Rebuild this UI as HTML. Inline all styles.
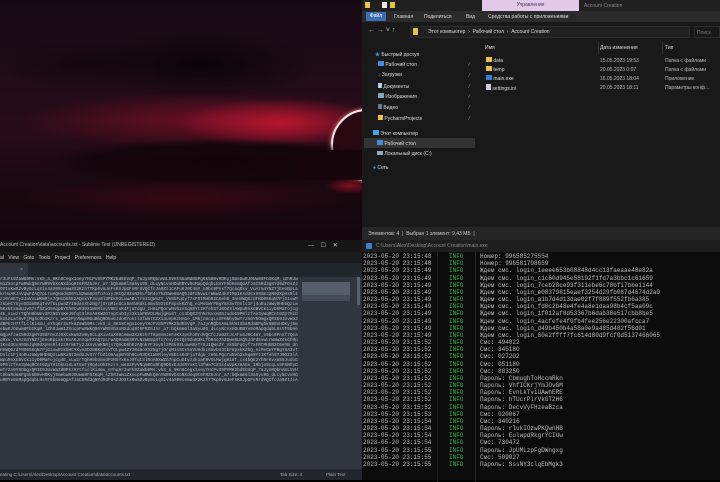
<!DOCTYPE html>
<html><head><meta charset="utf-8">
<style>
*{margin:0;padding:0;box-sizing:border-box}
body{width:720px;height:480px;overflow:hidden;background:#000;font-family:"Liberation Sans","Noto Sans CJK SC",sans-serif;position:relative}
.abs{position:absolute}
#wall{left:0;top:0;width:362px;height:240px;overflow:hidden;background:linear-gradient(#150a14,#240c18 40%,#2a0c18 55%,#1c0810 75%,#14060c)}
.g{position:absolute;border-radius:50%}
#arc{left:331px;top:109px;width:72px;height:72px;border-radius:50%;border:2px solid #f2e8ea;box-shadow:0 0 4px #f88;background:#2a0812}
#exp{left:362px;top:0;width:358px;height:240px;background:#191919;font-size:5px;color:#ddd}
#con{left:362px;top:240px;width:358px;height:240px;background:#0c0c0c;font-family:"Liberation Mono","DejaVu Sans Mono",monospace;font-size:6px;color:#bdbdbd}
#con .l{position:absolute;left:1px;white-space:pre;height:7px;line-height:7px}
#subl{left:0;top:240px;width:362px;height:240px;background:#303540}
#code{left:0;top:277px;width:300px;height:106px;overflow:hidden;font-family:"Liberation Mono",monospace;font-size:4.4px;line-height:5.05px;color:#b8bec9;word-break:break-all}
</style></head><body>
<div id="wall" class="abs">
 <div class="g" style="left:80px;top:30px;width:240px;height:70px;background:radial-gradient(closest-side,rgba(8,3,8,.85),rgba(8,3,8,0))"></div>
 <div class="g" style="left:0;top:40px;width:160px;height:50px;background:radial-gradient(closest-side,rgba(8,3,8,.5),rgba(8,3,8,0))"></div>
 <div class="g" style="left:20px;top:92px;width:380px;height:56px;background:radial-gradient(closest-side,rgba(120,15,38,.85),rgba(120,15,38,0))"></div>
 <div class="g" style="left:180px;top:98px;width:200px;height:50px;background:radial-gradient(closest-side,rgba(190,22,48,.95),rgba(190,22,48,0))"></div>
 <div id="arc" class="abs"></div>
 <div class="g" style="left:40px;top:138px;width:360px;height:48px;background:radial-gradient(closest-side,rgba(18,5,10,1),rgba(18,5,10,.85) 70%,rgba(18,5,10,0))"></div>
 <div class="abs" style="left:300px;top:150px;width:62px;height:30px;background:#16060c"></div>
 <div class="g" style="left:325px;top:178px;width:50px;height:16px;background:radial-gradient(closest-side,rgba(150,15,38,.85),rgba(150,15,38,0))"></div>
 <div class="g" style="left:20px;top:178px;width:330px;height:40px;background:radial-gradient(closest-side,rgba(80,10,28,.55),rgba(80,10,28,0))"></div>
</div>

<div id="exp" class="abs">
 <div class="abs" style="left:0;top:0;width:358px;height:11px;background:#202020"></div>
 <div class="abs" style="left:3px;top:2px;width:5px;height:6px;background:#e8c24a"></div>
 <div class="abs" style="left:20px;top:2px;width:5px;height:6px;background:#eee"></div>
 <div class="abs" style="left:28px;top:2px;width:5px;height:6px;background:#e8c24a"></div>
 <div class="abs" style="left:120px;top:0;width:97px;height:11px;background:#e3c8ec;color:#444;text-align:center;line-height:11px">Управление</div>
 <div class="abs" style="left:222px;top:3px;color:#888">Account Creation</div>
 <div class="abs" style="left:0;top:11px;width:358px;height:11px;background:#2b2b2b"></div>
 <div class="abs" style="left:4px;top:12px;width:20px;height:9px;background:#3c6fb5;color:#fff;text-align:center;line-height:9px">Файл</div>
 <div class="abs" style="left:32px;top:14px">Главная</div>
 <div class="abs" style="left:62px;top:14px">Поделиться</div>
 <div class="abs" style="left:104px;top:14px">Вид</div>
 <div class="abs" style="left:126px;top:14px">Средства работы с приложениями</div>
 <div class="abs" style="left:6px;top:27px;color:#ccc;font-size:7px">← → ˅ ↑</div>
 <div class="abs" style="left:48px;top:26px;width:280px;height:12px;background:#202020;border:1px solid #2e2e2e"></div>
 <div class="abs" style="left:51px;top:28px;width:5px;height:7px;background:#e8c24a"></div>
 <div class="abs" style="left:66px;top:29px">Этот компьютер &nbsp;›&nbsp; Рабочий стол &nbsp;›&nbsp; Account Creation</div>
 <div class="abs" style="left:332px;top:26px;width:26px;height:12px;border:1px solid #2e2e2e;color:#777;padding:3px 2px">Поиск</div>
 <div class="abs" style="left:13px;top:51px"><span style="color:#4a9ee8">★</span> Быстрый доступ</div>
 <div class="abs" style="left:16px;top:61px"><span style="display:inline-block;width:6px;height:5px;background:#3a8ee0"></span> Рабочий стол</div>
 <div class="abs" style="left:16px;top:72px"><span style="color:#3a8ee0">↓</span> Загрузки</div>
 <div class="abs" style="left:16px;top:83px"><span style="display:inline-block;width:4px;height:5px;background:#bcd"></span> Документы</div>
 <div class="abs" style="left:16px;top:93px"><span style="display:inline-block;width:6px;height:5px;background:#7ab"></span> Изображения</div>
 <div class="abs" style="left:16px;top:104px"><span style="display:inline-block;width:4px;height:5px;background:#778"></span> Видео</div>
 <div class="abs" style="left:16px;top:115px"><span style="display:inline-block;width:5px;height:5px;background:#e8c24a"></span> PycharmProjects</div>
 <div class="abs" style="left:107px;top:62px;color:#aaa">⁄</div><div class="abs" style="left:107px;top:73px;color:#aaa">⁄</div><div class="abs" style="left:107px;top:84px;color:#aaa">⁄</div><div class="abs" style="left:107px;top:94px;color:#aaa">⁄</div><div class="abs" style="left:107px;top:105px;color:#aaa">⁄</div><div class="abs" style="left:107px;top:116px;color:#aaa">⁄</div>
 <div class="abs" style="left:11px;top:130px"><span style="display:inline-block;width:6px;height:5px;background:#4aa0e0"></span> Этот компьютер</div>
 <div class="abs" style="left:2px;top:138px;width:111px;height:10px;background:#333"></div>
 <div class="abs" style="left:15px;top:140px"><span style="display:inline-block;width:6px;height:5px;background:#3a8ee0"></span> Рабочий стол</div>
 <div class="abs" style="left:15px;top:151px"><span style="display:inline-block;width:6px;height:4px;background:#9ab"></span> Локальный диск (C:)</div>
 <div class="abs" style="left:11px;top:165px"><span style="color:#4aa0e0">●</span> Сеть</div>
 <div class="abs" style="left:123px;top:45px">Имя</div>
 <div class="abs" style="left:238px;top:45px">Дата изменения</div>
 <div class="abs" style="left:303px;top:45px">Тип</div>
 <div class="abs" style="left:236px;top:42px;width:1px;height:12px;background:#333"></div>
 <div class="abs" style="left:300px;top:42px;width:1px;height:12px;background:#333"></div>
 <div class="abs" style="left:124px;top:57px"><span style="display:inline-block;width:6px;height:5px;background:#e8c24a"></span> data</div>
 <div class="abs" style="left:124px;top:66px"><span style="display:inline-block;width:6px;height:5px;background:#e8c24a"></span> temp</div>
 <div class="abs" style="left:124px;top:75px"><span style="display:inline-block;width:6px;height:5px;background:#3a7fd0"></span> main.exe</div>
 <div class="abs" style="left:124px;top:84px"><span style="display:inline-block;width:5px;height:6px;background:#ccd"></span> settings.ini</div>
 <div class="abs" style="left:238px;top:58px;color:#bbb">15.05.2023 19:53</div>
 <div class="abs" style="left:238px;top:67px;color:#bbb">20.05.2023 0:07</div>
 <div class="abs" style="left:238px;top:76px;color:#bbb">16.05.2023 18:04</div>
 <div class="abs" style="left:238px;top:85px;color:#bbb">20.05.2023 18:11</div>
 <div class="abs" style="left:303px;top:58px;color:#bbb">Папка с файлами</div>
 <div class="abs" style="left:303px;top:67px;color:#bbb">Папка с файлами</div>
 <div class="abs" style="left:303px;top:76px;color:#bbb">Приложение</div>
 <div class="abs" style="left:303px;top:85px;color:#bbb">Параметры конф...</div>
 <div class="abs" style="left:0;top:227px;width:358px;height:13px;background:#262626"></div>
 <div class="abs" style="left:6px;top:231px;color:#ccc">Элементов: 4 &nbsp;|&nbsp; Выбран 1 элемент: 9,43 МБ &nbsp;|</div>
</div>

<div id="con" class="abs">
 <div class="abs" style="left:0;top:0;width:358px;height:12px;background:#1e1e1e"></div>
 <div class="abs" style="left:4px;top:3px;width:6px;height:6px;background:#3a7fd0;border-radius:1px"></div>
 <div class="abs" style="left:14px;top:3px;font-family:'Liberation Sans',sans-serif;font-size:5px;color:#888">C:\Users\Alex\Desktop\Account Creation\main.exe</div>
 <div class="abs" style="left:75px;top:12px;width:1px;height:230px;background:#222"></div>
 <div class="abs" style="left:113px;top:12px;width:1px;height:230px;background:#222"></div>
 <div id="lines"></div>
</div>

<div id="subl" class="abs">
 <div class="abs" style="left:0;top:0;width:362px;height:12px;background:#151515"></div>
 <div class="abs" style="left:0;top:2px;font-size:5px;color:#bbb;white-space:nowrap">Account Creation\data\accounts.txt - Sublime Text (UNREGISTERED)</div>
 <div class="abs" style="left:308px;top:2px;font-size:6px;color:#ccc">—&nbsp;&nbsp;&nbsp;&nbsp;☐&nbsp;&nbsp;&nbsp;&nbsp;✕</div>
 <div class="abs" style="left:0;top:12px;width:362px;height:11px;background:#1a1a1a"></div>
 <div class="abs" style="left:0;top:15px;font-size:5px;color:#ccc;word-spacing:3px">al View Goto Tools Project Preferences Help</div>
 <div class="abs" style="left:0;top:23px;width:362px;height:14px;background:#23262d"></div>
 <div class="abs" style="left:0;top:23px;width:28px;height:14px;background:#303540"></div>
 <div class="abs" style="left:20px;top:27px;font-size:5px;color:#aaa">×</div>
 <div class="abs" style="left:302px;top:42px;width:48px;height:13px;background:#565d6c"></div>
 <div class="abs" style="left:302px;top:55px;width:48px;height:6px;background:#454b57"></div>
 <div class="abs" style="left:357px;top:37px;width:3px;height:28px;background:#5a606c"></div>
 <div class="abs" style="left:0;top:229px;width:362px;height:11px;background:#23262d"></div>
 <div class="abs" style="left:0;top:232px;font-size:4.5px;color:#aaa;white-space:nowrap">eating C:\Users\Alex\Desktop\Account Creation\data\accounts.txt</div>
 <div class="abs" style="left:280px;top:232px;font-size:4.5px;color:#aaa">Tab Size: 4</div>
 <div class="abs" style="left:326px;top:232px;font-size:4.5px;color:#aaa">Plain Text</div>
</div>
<div id="code" class="abs"></div>
<script>
var s="r3uFk8ZaWb0Ms:vkS_a_0Kn8Cegx1oeyYHcPvS5PYMK2bdEbVqP_7aJynRQbnAmL5VHtSbaRdm8Pg5k5B0vHOKyj5mebwRJOUwm0FbIKqM_lZhRJwm1ZXocpFwRWkQ9nYWR9VbXoNXdoq9t6FRZ5Jnr_a7:bQkmm6l3a5yu95_dLcyNcvxHOuRBYv9oMapQdqbLHsYF5bHemQpAfJaC5Rd3gNYd9dFOsZJOXtxKwSZvBy9cLqXiv4aX09cemw3X2Kzh7TKp0vmJeFsKXJpGFoRrdVQCfcJa9ZtJcAFu6J0C4mY_n9bc9Pnxf7QcaqRxv_VuAzm4YNZ7jEeoBpLakrHxAKJnVqwFZAQ7pLrwAQHadmS6YLN2Wm8pSfo7oxyJKtQz9ZuN3kLfbR4o7hZGWe8UAQ5JdFd5vwLrWmwZ4kGtMp1Ksd3GxH9SmJqN0dXpHsRl4zz0rmETy2JaVvLWKNRjs7QHcD6hE2AQnkYF3oy8l3PEk93LuwABxTr8J1QWsZY_Vk5bFqCyf7xFRtMHbR2C6ehB_3nHVWQGzdFNO05KqN7PjG1uwRzkbHCYXyeSD2mBKqTsVfGLpw4ZYI0daoXh2Ng7jOrqM1nSCx5aVUHdkL6mvb93tEF8pxkKZhQ_eiMsGWrPBgY8A3vTDnlc1Fj4oRuJaWy0HE6QzLw5KxNt2mdUJvS7rfbZiO9AqpBYGh0CuR3DX1WnMleyV8EcsK4FjaTdgU_zH6LPQorwNvb2x5qm9YtIKfehS7J0OZ3lAWpuRnXGBVCk1iyD8MaFojcg4E_sLwzrTQhH6bUmvdP2N5YxKeJ9fqtSlRoA0XWZG7npCuDIyz3k1aFBVOLMwjgHi8T_cs4bQE2YhNrKvxmS5JudoG9P0lzfAe3yWqRCnt6Zp7HiDkU1XLaT8vFjMg4cObIKzrs_weS2PyVNqm0GuBhQ9D5xEJdnRYoktl3fWa7CZXi4uVpKzHAGe_1Mbjo8cqLsSF6NhyDwTr2n0Y5OmgxQRIE9JUvWa3dBPkzH7tfLclKi4mu_eYhq6";
document.getElementById("code").textContent=s+s+s;
var d=[["48","Номер: 996585275554"],["48","Номер: 996581798659"],["49","Ждем смс. login_1eeee653b08848d4cc13faeaae48e82a"],["49","Ждем смс. login_c1c60d945e58192f1fd7a3bbc1c61659"],["49","Ждем смс. login_7ceb28ce93f311ebe6c78bf17bbe1144"],["49","Ждем смс. login_e08379815eaef3254d29fb087d4674d2a0"],["49","Ждем смс. login_a1b7d4d13dae02f7f889f552fb6a385"],["49","Ждем смс. login_fd0c2b48e4fe4a8e1daa98b4cf5aa09c"],["49","Ждем смс. login_1f012af0d53367b6dab38e517cbb8be5"],["49","Ждем смс. login_4acfefe4f0fb4fee256e22300afcca7"],["49","Ждем смс. login_d49b450b4a58a0e9a485d482f56d01"],["49","Ждем смс. login_60e2ffff7fc614d80d9fcf0d5137466065"],["52","Смс: 494022"],["52","Смс: 345180"],["52","Смс: 027202"],["52","Смс: 051180"],["52","Смс: 883250"],["52","Пароль: CbmughToHccmRkn"],["52","Пароль: VhfICKrjYmJOvGM"],["52","Пароль: EvnLkTviUAwhERE"],["52","Пароль: hTUcrPlrVkGT2H6"],["52","Пароль: DecvVyFHzeaBzca"],["53","Смс: 020067"],["54","Смс: 340216"],["54","Пароль: rlukIOzwPKQwnHB"],["54","Пароль: EulwpdRkgrYCIUw"],["54","Смс: 730472"],["55","Пароль: JpUMLzpFgDWngxg"],["55","Смс: 509027"],["55","Пароль: SssNY3clqEbMgk3"]];
var h="",i;for(i=0;i<d.length;i++){var y=13+i*7.17;h+='<div class="l" style="top:'+y+'px">2023-05-20 23:15:'+d[i][0]+'</div><div class="l" style="left:87px;top:'+y+'px;color:#2fbf4a">INFO</div><div class="l" style="left:118px;top:'+y+'px">'+d[i][1]+'</div>';}
document.getElementById("lines").innerHTML=h;
</script>
</body></html>
